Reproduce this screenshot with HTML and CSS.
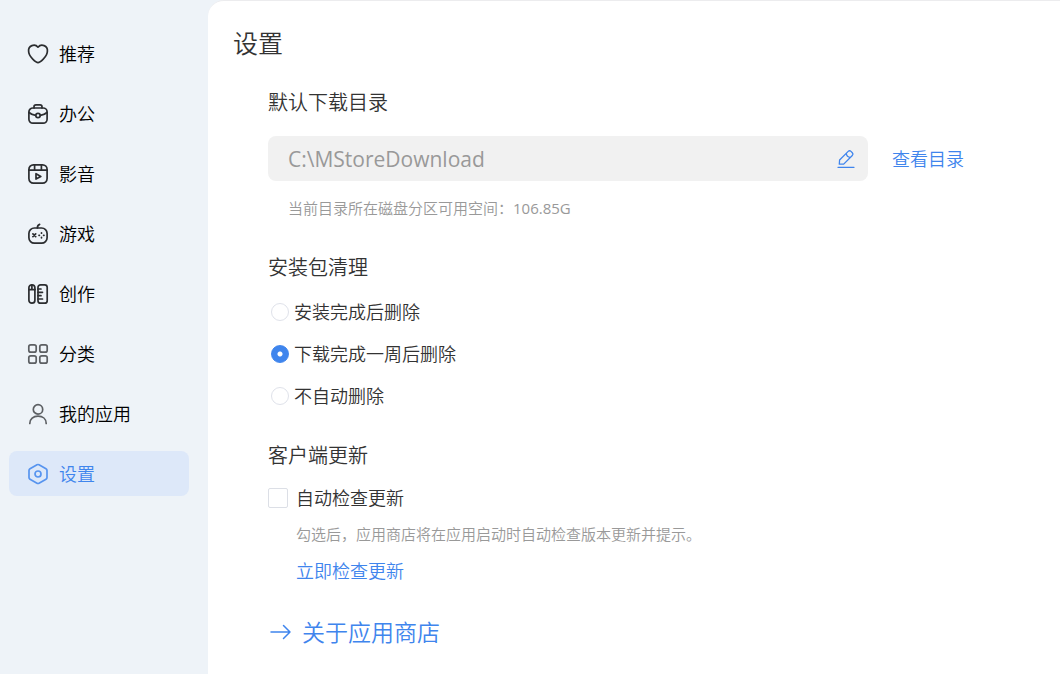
FILE: index.html
```
<!DOCTYPE html>
<html lang="zh-CN">
  <head>
    <meta charset="utf-8" />
    <title>设置</title>
    <link rel="stylesheet" href="styles.css">
  </head>
  <body>
    <nav class="sidebar">
      <a class="nav-item" href="#recommend">
        <svg class="icon" viewBox="0 0 22 22">
          <path d="M11 19.6C9.5 19.6 1.6 14 1.6 8A5.3 5.3 0 0 1 11 4.2A5.3 5.3 0 0 1 20.4 8C20.4 14 12.5 19.6 11 19.6z" />
        </svg>
        推荐
      </a>
      <a class="nav-item" href="#office">
        <svg class="icon" viewBox="0 0 22 22">
          <rect x="1.9" y="5" width="18.2" height="15.2" rx="4" />
          <path d="M7 5V3.8a2 2 0 0 1 2-2h4a2 2 0 0 1 2 2V5M2 9.5c2 1.7 4 2.5 6.6 2.9M20 9.5c-2 1.7-4 2.5-6.6 2.9" />
          <circle cx="11" cy="12.5" r="2.2" />
        </svg>
        办公
      </a>
      <a class="nav-item" href="#media">
        <svg class="icon" viewBox="0 0 22 22">
          <rect x="1.9" y="1.9" width="18.2" height="18.2" rx="4.5" />
          <path d="M2 7.2h18M7.6 2v5M14.4 2v5M9 10.7v5.4l4.8-2.7z" />
        </svg>
        影音
      </a>
      <a class="nav-item" href="#games">
        <svg class="icon" viewBox="0 0 22 22">
          <rect x="1.9" y="5" width="18.2" height="15.2" rx="5.5" />
          <path d="M10.4 5c0-2 .6-3 2.2-3.6" />
          <path d="M5.9 10.9l2.8 2.8M8.7 10.9l-2.8 2.8" />
          <path d="M14.5 9.8v.4M14.5 14.4v.4M12 12.3h.4M16.6 12.3h.4" />
        </svg>
        游戏
      </a>
      <a class="nav-item" href="#create">
        <svg class="icon" viewBox="0 0 22 22">
          <rect x="1.9" y="1.8" width="6" height="18.4" rx="3" />
          <path d="M2 6.6h6M4.9 2v4.6" />
          <rect x="11" y="1.8" width="9.2" height="18.4" rx="2.5" />
          <path d="M11 6h3M11 9.3h4.5M11 12.7h3M11 16h4.5" />
        </svg>
        创作
      </a>
      <a class="nav-item" href="#category">
        <svg class="icon icon-light" viewBox="0 0 22 22">
          <rect x="1.8" y="1.8" width="7.4" height="7.4" rx="2" />
          <rect x="12.8" y="1.8" width="7.4" height="7.4" rx="2" />
          <rect x="1.8" y="12.8" width="7.4" height="7.4" rx="2" />
          <rect x="12.8" y="12.8" width="7.4" height="7.4" rx="2" />
        </svg>
        分类
      </a>
      <a class="nav-item" href="#apps">
        <svg class="icon icon-light" viewBox="0 0 22 22">
          <circle cx="11" cy="6.4" r="4.7" />
          <path d="M2.8 20.5c0-4.5 3.5-7.3 8.2-7.3s8.2 2.8 8.2 7.3" />
        </svg>
        我的应用
      </a>
      <a class="nav-item active" href="#settings">
        <svg class="icon" viewBox="0 0 22 22">
          <path d="M10 1.8a2 2 0 0 1 2 0l7 3.9a2 2 0 0 1 1 1.7v7.2a2 2 0 0 1-1 1.7l-7 3.9a2 2 0 0 1-2 0l-7-3.9a2 2 0 0 1-1-1.7V7.4a2 2 0 0 1 1-1.7z" />
          <circle cx="11" cy="11" r="3" />
        </svg>
        设置
      </a>
    </nav>

    <main class="content">
      <h1>设置</h1>
      <div class="settings">
        <section>
          <h2><label for="path">默认下载目录</label></h2>
          <div class="path-row">
            <div class="path-box">
              <input type="text" id="path" value="C:\MStoreDownload" readonly />
              <button class="edit" type="button" aria-label="修改目录">
                <svg viewBox="0 0 18 20">
                  <path d="M2.3 15.2l.3-4.2 8.6-8.6a2 2 0 0 1 2.8 0l1.3 1.3a2 2 0 0 1 0 2.8l-8.6 8.6zM9.3 4.3c.2 2.6 1.5 4 4.1 4.1M1 18.3h16" />
                </svg>
              </button>
            </div>
            <a href="#folder">查看目录</a>
          </div>
          <p class="note path-note">当前目录所在磁盘分区可用空间：<span class="size">106.85G</span></p>
        </section>

        <section class="cleanup">
          <h2>安装包清理</h2>
          <label class="radio"><input type="radio" name="clean" />安装完成后删除</label>
          <label class="radio"><input type="radio" name="clean" checked />下载完成一周后删除</label>
          <label class="radio"><input type="radio" name="clean" />不自动删除</label>
        </section>

        <section class="update">
          <h2>客户端更新</h2>
          <label class="check"><input type="checkbox" />自动检查更新</label>
          <p class="note">勾选后，应用商店将在应用启动时自动检查版本更新并提示。</p>
          <a class="check-now" href="#update">立即检查更新</a>
        </section>

        <a class="about" href="#about">
          <svg viewBox="0 0 22 22">
            <path d="M1 11h19M13.5 4.5L20 11l-6.5 6.5" />
          </svg>
          关于应用商店
        </a>
      </div>
    </main>
  </body>
</html>
```
FILE: styles.css
```
* {
  box-sizing: border-box;
}
body {
  display: flex;
  min-height: 100vh;
  margin: 0;
  background-color: #eef3f8;
  color: #333;
  font-family: "Open Sans", "Noto Sans CJK SC", sans-serif;
  font-size: 18px;
  font-weight: 350;
  line-height: 24px;
}
h1,
h2,
p {
  margin: 0;
  font-weight: inherit;
}
a {
  color: #3f85ed;
  text-decoration: none;
}
svg {
  flex: none;
  fill: none;
  stroke: currentColor;
  stroke-width: 1.5;
  stroke-linecap: round;
  stroke-linejoin: round;
}

/* Sidebar */
.sidebar {
  display: flex;
  flex-direction: column;
  flex: none;
  gap: 15px;
  width: 208px;
  padding: 31px 19px 31px 9px;
}
.nav-item {
  display: flex;
  align-items: center;
  gap: 10px;
  height: 45px;
  padding-left: 18px;
  border-radius: 8px;
  color: #000;
}
.nav-item.active {
  background-color: #dde8f9;
  color: #3f85ed;
}
.icon {
  width: 22px;
  height: 22px;
  color: #2b2d30;
  stroke-width: 1.7;
}
.icon-light {
  color: #5c5f63;
}
.active .icon {
  color: #5794ef;
}

/* Settings page */
.content {
  flex: 1;
  padding: 24px 25px;
  border-top: 1px solid #ececee;
  border-top-left-radius: 16px;
  background-color: #fff;
}
h1 {
  font-size: 25px;
  line-height: 36px;
}
h2 {
  font-size: 20px;
  line-height: 28px;
}
.settings {
  padding: 28px 0 0 35px;
}
.path-row {
  display: flex;
  align-items: center;
  gap: 24px;
  margin-top: 19px;
}
.path-box {
  display: flex;
  align-items: center;
  flex: 0 1 600px;
  height: 45px;
  padding: 0 13px 0 20px;
  border-radius: 8px;
  background-color: #f1f1f1;
}
.path-box input {
  flex: 1;
  min-width: 0;
  padding: 0;
  border: none;
  outline: none;
  background: none;
  color: #999;
  font-family: inherit;
  font-size: 21px;
}
.edit {
  display: flex;
  padding: 0;
  border: none;
  background: none;
  color: #3f85ed;
  cursor: pointer;
}
.edit svg {
  width: 18px;
  height: 20px;
  stroke-width: 1.3;
}
.note {
  color: #999;
  font-size: 15px;
  line-height: 20px;
}
.path-note {
  margin: 17px 0 0 20px;
}
.size {
  font-weight: 400;
}
.cleanup {
  margin-top: 36px;
}
.cleanup h2 {
  margin-bottom: 9px;
}
.radio {
  display: flex;
  align-items: center;
  gap: 5px;
  width: fit-content;
  height: 42px;
  padding-left: 3px;
}
.radio input {
  appearance: none;
  width: 18px;
  height: 18px;
  margin: 0;
  border: 1px solid #dfe2ea;
  border-radius: 50%;
}
.radio input:checked {
  border-color: #3f85ed;
  background: radial-gradient(#fff 2px, #3f85ed 3px);
}
.update {
  margin-top: 25px;
}
.check {
  display: flex;
  align-items: center;
  gap: 8px;
  width: fit-content;
  margin-top: 16px;
}
.check input {
  appearance: none;
  width: 20px;
  height: 20px;
  margin: 0;
  border: 1px solid #dcdfe6;
  border-radius: 2px;
}
.check input:checked {
  border: 6px solid #3f85ed;
}
.update .note {
  margin: 14px 0 15px 28px;
}
.check-now {
  display: block;
  width: fit-content;
  margin-left: 28px;
}
.about {
  display: flex;
  align-items: center;
  gap: 10px;
  width: fit-content;
  margin-top: 33px;
  padding-left: 2px;
  font-size: 23px;
  line-height: 32px;
}
.about svg {
  width: 22px;
  height: 22px;
}
```
